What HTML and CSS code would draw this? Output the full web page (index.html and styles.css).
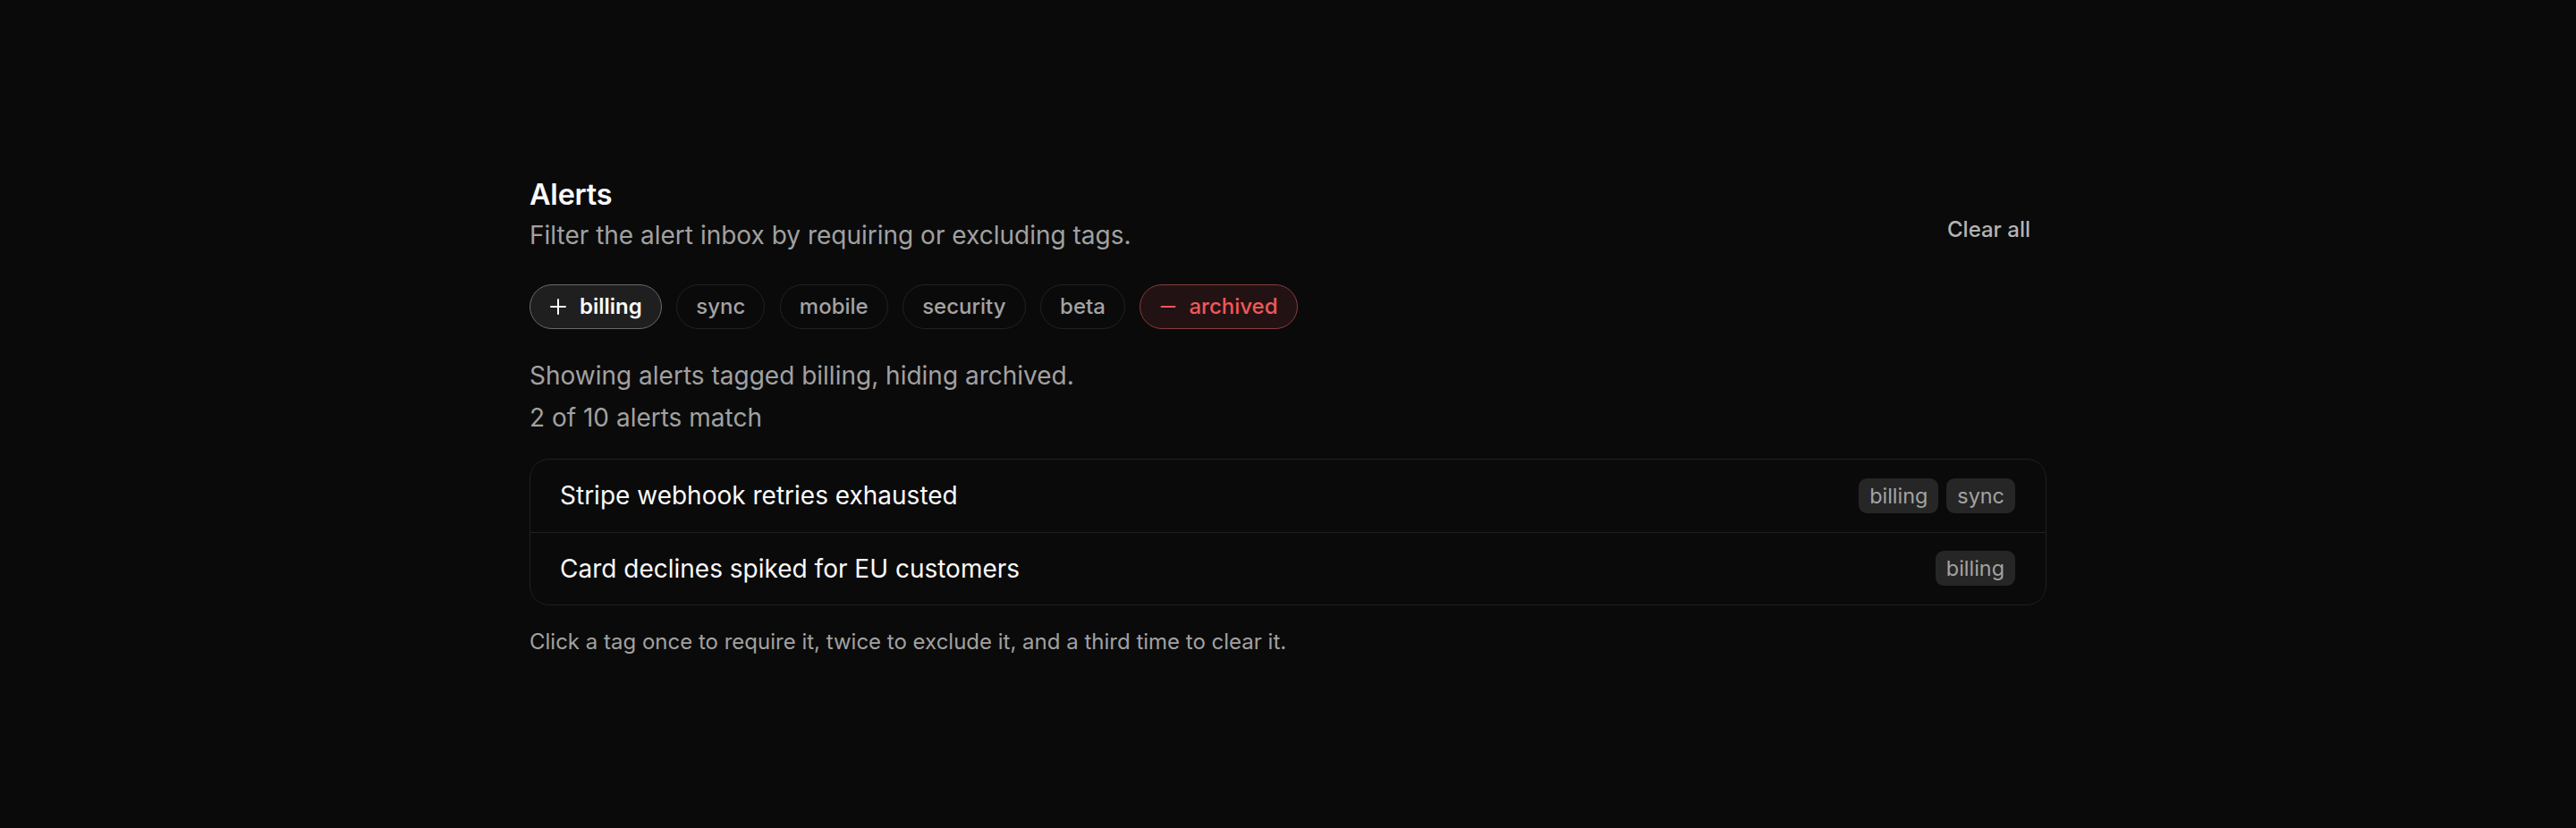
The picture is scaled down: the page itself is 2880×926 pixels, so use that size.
FILE: index.html
```html
<!DOCTYPE html>
<html lang="en">
<head>
<meta charset="utf-8">
<title>Alerts</title>
<link rel="stylesheet" href="styles.css">
</head>
<body>
<main class="panel">
  <header class="panel-head">
    <div class="head-text">
      <h1 class="title">Alerts</h1>
      <p class="subtitle">Filter the alert inbox by requiring or excluding tags.</p>
    </div>
    <button class="clear-btn" type="button">Clear all</button>
  </header>

  <div class="chips">
    <button class="chip chip-require" type="button">
      <svg class="chip-icon" viewBox="0 0 20 20" aria-hidden="true"><path d="M10 2v16M2 10h16"/></svg>
      <span>billing</span>
    </button>
    <button class="chip" type="button"><span>sync</span></button>
    <button class="chip" type="button"><span>mobile</span></button>
    <button class="chip" type="button"><span>security</span></button>
    <button class="chip" type="button"><span>beta</span></button>
    <button class="chip chip-exclude" type="button">
      <svg class="chip-icon" viewBox="0 0 20 20" aria-hidden="true"><path d="M2.5 10h15"/></svg>
      <span>archived</span>
    </button>
  </div>

  <div class="status">
    <p class="status-line">Showing alerts tagged billing, hiding archived.</p>
    <p class="status-line">2 of 10 alerts match</p>
  </div>

  <ul class="alert-list">
    <li class="alert-row">
      <span class="alert-title">Stripe webhook retries exhausted</span>
      <span class="tags"><span class="tag">billing</span><span class="tag">sync</span></span>
    </li>
    <li class="alert-row">
      <span class="alert-title">Card declines spiked for EU customers</span>
      <span class="tags"><span class="tag">billing</span></span>
    </li>
  </ul>

  <p class="hint">Click a tag once to require it, twice to exclude it, and a third time to clear it.</p>
</main>
</body>
</html>
```

FILE: styles.css
```css
* { box-sizing: border-box; }

html, body {
  margin: 0;
  padding: 0;
  background: #0a0a0a;
}

body {
  font-family: Inter, "Noto Sans", "Liberation Sans", sans-serif;
  color: #fafafa;
  min-height: 926px;
}

.panel {
  width: 1696px;
  margin: 0 auto;
  padding-top: 199px;
  display: flex;
  flex-direction: column;
}

.panel-head {
  display: flex;
  justify-content: space-between;
  align-items: center;
}

.head-text {
  display: flex;
  flex-direction: column;
  gap: 4px;
}

.title {
  margin: 0;
  font-size: 32.4px;
  line-height: 1.2;
  font-weight: 600;
  color: #fafafa;
  letter-spacing: -0.2px;
}

.subtitle {
  margin: 0;
  font-size: 28px;
  line-height: 43px;
  color: #a1a1a1;
}

.clear-btn {
  font-family: inherit;
  background: transparent;
  border: 0;
  color: #b4b4b4;
  font-size: 24px;
  font-weight: 500;
  padding: 10px 18px;
  margin-top: 30px;
  cursor: pointer;
}

.chips {
  display: flex;
  gap: 16.5px;
  margin-top: 33px;
}

.chip {
  font-family: inherit;
  display: inline-flex;
  align-items: center;
  gap: 12px;
  height: 50px;
  padding: 0 21px;
  border-radius: 999px;
  border: 1.8px solid #222222;
  background: transparent;
  color: #a3a3a3;
  font-size: 24px;
  font-weight: 500;
  cursor: pointer;
}

.chip-icon {
  width: 20px;
  height: 20px;
  fill: none;
  stroke: currentColor;
  stroke-width: 2;
  stroke-linecap: round;
}

.chip-require {
  background: #1f1f1f;
  border-color: #6b6b6b;
  color: #fafafa;
  font-weight: 600;
  gap: 14px;
  padding: 0 21px;
}

.chip-exclude {
  background: #231213;
  border-color: #8a3b3b;
  color: #f25757;
  font-weight: 500;
  gap: 13px;
  padding: 0 21px;
}

.status {
  margin-top: 29px;
  display: flex;
  flex-direction: column;
}

.status-line {
  margin: 0;
  font-size: 28px;
  line-height: 47px;
  color: #a1a1a1;
}

.alert-list {
  list-style: none;
  margin: 22px 0 0;
  padding: 0;
  border: 1.8px solid #1f1f1f;
  border-radius: 22px;
  overflow: hidden;
}

.alert-row {
  display: flex;
  justify-content: space-between;
  align-items: center;
  height: 81px;
  padding: 0 34px 0 33px;
}

.alert-row + .alert-row {
  border-top: 1.8px solid #1f1f1f;
}

.alert-title {
  font-size: 28px;
  color: #fafafa;
}

.tags {
  display: flex;
  gap: 9px;
}

.tag {
  display: inline-flex;
  align-items: center;
  height: 39px;
  padding: 0 12px;
  border-radius: 9px;
  background: #262626;
  color: #a3a3a3;
  font-size: 23.4px;
}

.hint {
  margin: 23px 0 0;
  font-size: 24px;
  line-height: 35px;
  color: #a1a1a1;
}
```
